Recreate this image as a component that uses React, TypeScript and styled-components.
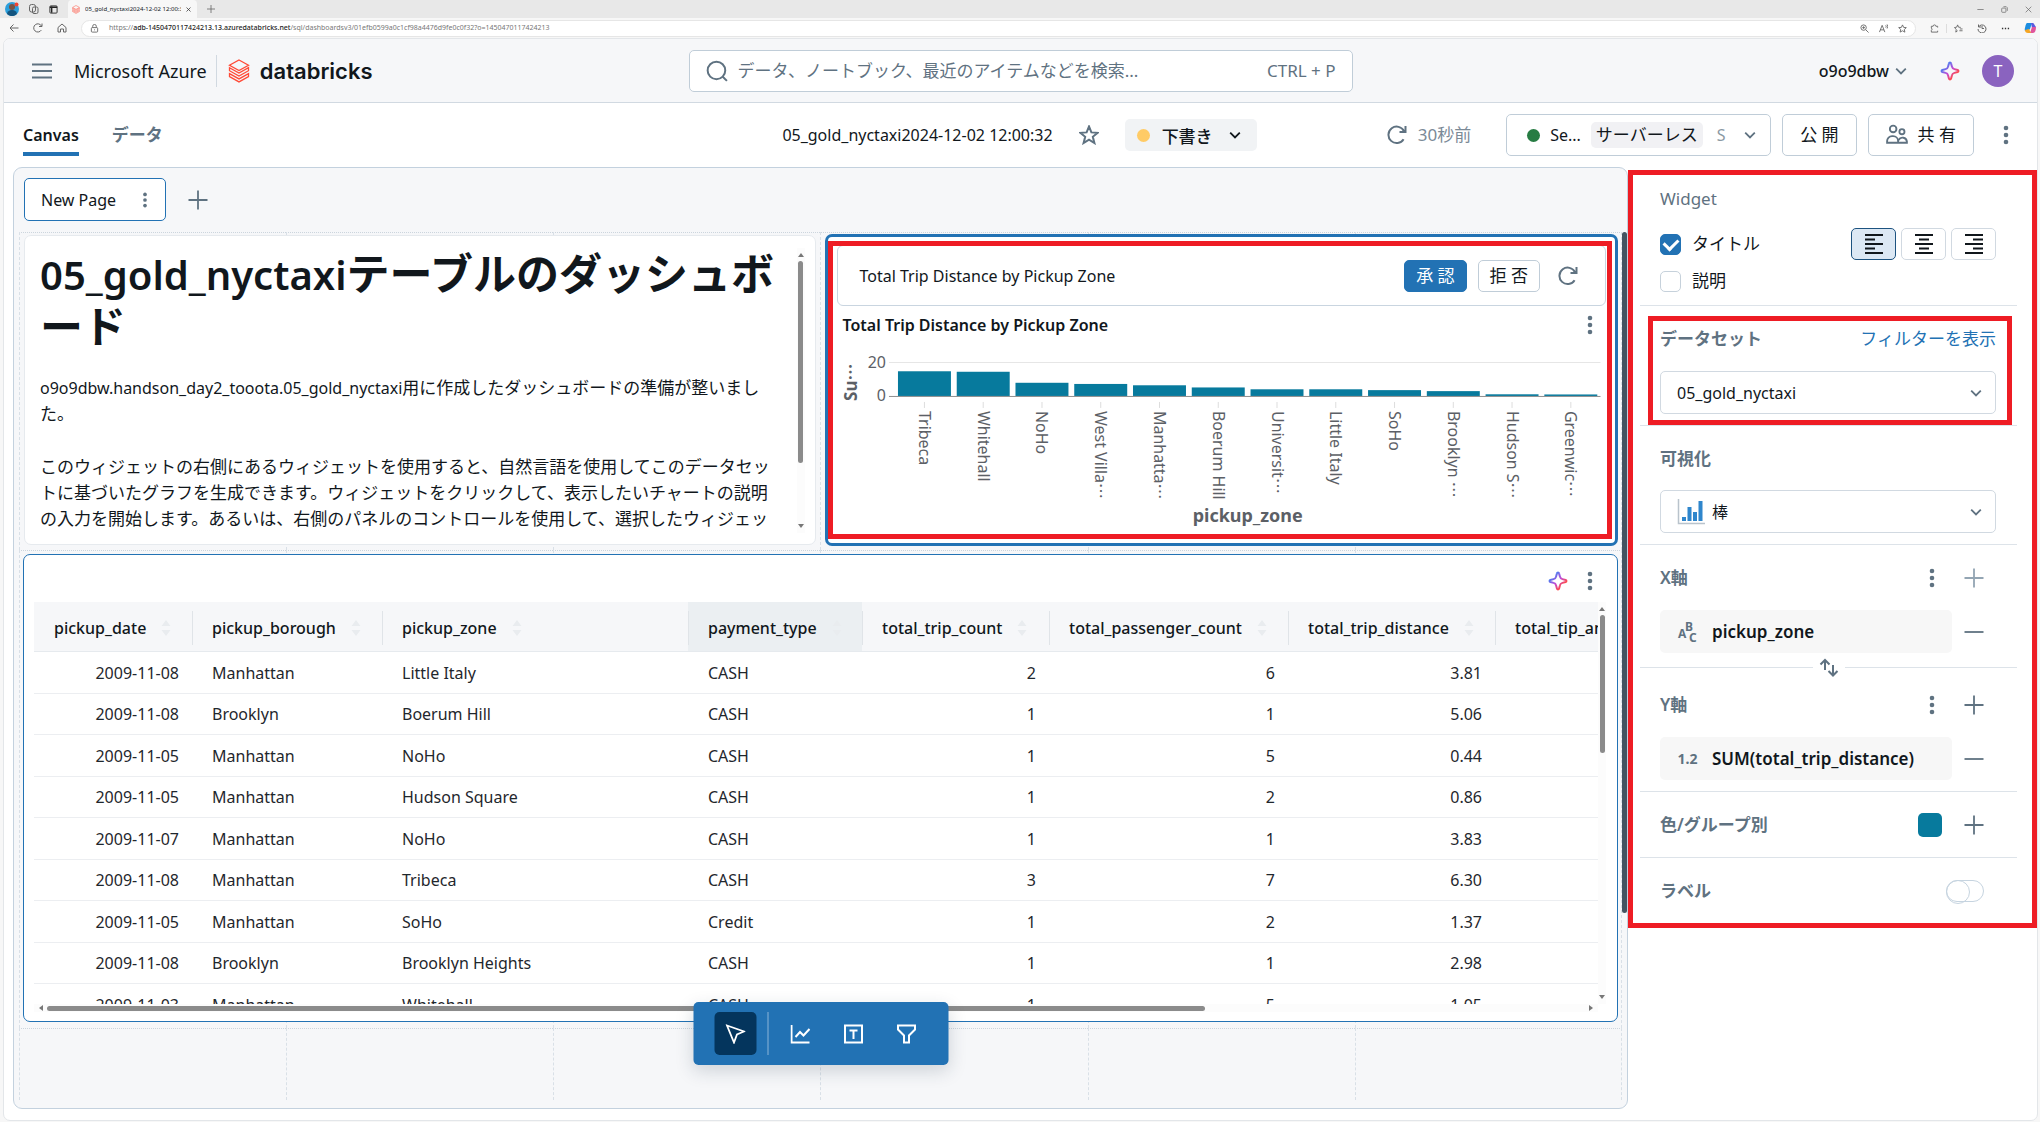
import React from "react";
import styled, { createGlobalStyle, css } from "styled-components";

const c = {
  text: "#11171c",
  muted: "#5f7281",
  line: "#d1d9e1",
  soft: "#e6eaee",
  bg: "#f6f7f9",
  blue: "#2272b4",
  teal: "#077a9d",
  red: "#ee1c24",
};

const Global = createGlobalStyle`
  * { box-sizing: border-box; }
  body { margin: 0; background: #f7f7f7; }
  body, button, input, select { font-family: "Noto Sans", "Noto Sans CJK JP", sans-serif; color: ${c.text}; }
  button { cursor: pointer; }
`;

const Shell = styled.div`
  min-height: 100vh;
  display: flex;
  flex-direction: column;
  padding: 0 2px 1px 3px;
  font-size: 16px;
  line-height: 24px;
`;

/* ---------- icons ---------- */

const Svg = styled.svg<{ $tone?: string }>`
  display: block;
  flex: none;
  fill: none;
  stroke: ${(p) => p.$tone ?? c.muted};
`;

type IconProps = { size?: number; tone?: string; w?: number; children?: React.ReactNode };
const Icon = ({ size = 20, tone, w = 2, children }: IconProps) => (
  <Svg width={size} height={size} viewBox="0 0 20 20" $tone={tone} strokeWidth={w} aria-hidden="true">
    {children}
  </Svg>
);
const Kebab = ({ tone = c.muted }: { tone?: string }) => (
  <Svg width="20" height="20" viewBox="0 0 20 20" aria-hidden="true">
    <g fill={tone} stroke="none">
      <circle cx="10" cy="3" r="2.3" />
      <circle cx="10" cy="10" r="2.3" />
      <circle cx="10" cy="17" r="2.3" />
    </g>
  </Svg>
);
const Plus = ({ tone }: { tone?: string }) => (
  <Icon tone={tone} w={1.8}><path d="M10 .5v19M.5 10h19" /></Icon>
);
const Minus = () => <Icon w={1.8}><path d="M.5 10h19" /></Icon>;
const Chevron = ({ tone }: { tone?: string }) => (
  <Icon size={12} tone={tone} w={3}><path d="M2 6l8 8 8-8" /></Icon>
);
const Refresh = () => (
  <Icon><path d="M16.6 14.2A8.2 8.2 0 1 1 17 6.2M18.5 1v6h-6" /></Icon>
);
const Sparkle = ({ id }: { id: string }) => (
  <Svg width="20" height="20" viewBox="0 0 20 20" aria-hidden="true">
    <defs>
      <linearGradient id={id} x1="0" y1="0" x2="1" y2="1">
        <stop offset="20%" stopColor="#4a7cf0" />
        <stop offset="50%" stopColor="#c24bd6" />
        <stop offset="78%" stopColor="#ff4a4a" />
      </linearGradient>
    </defs>
    <path
      d="M10 1.5c.5 0 .9.3 1 .8l.9 3.3c.3 1.2 1.2 2.2 2.5 2.5l3.3.9c1 .3 1 1.700 0 2l-3.300.9c-1.200.3-2.200 1.200-2.500 2.500l-.9 3.300c-.3 1-1.700 1-2 0l-.9-3.300c-.3-1.200-1.200-2.200-2.500-2.500l-3.300-.9c-1-.3-1-1.700 0-2l3.300-.9c1.200-.3 2.200-1.200 2.500-2.500l.9-3.300c.1-.5.5-.8 1-.8z"
      stroke={`url(#${id})`}
      strokeWidth="2"
    />
  </Svg>
);
const Brick = ({ w, h }: { w: number; h: number }) => (
  <Svg width={w} height={h} viewBox="0 0 22 24" $tone="#ff4b38" strokeWidth="1.3" aria-hidden="true">
    <path d="M11 1l9.500 5.300L11 11.600 1.500 6.300zM1.500 8.700L11 14l9.500-5.300v3L11 17l-9.500-5.300zM1.500 14.600L11 19.900l9.500-5.300v2.900L11 22.900l-9.500-5.400z" />
  </Svg>
);

/* ---------- browser chrome ---------- */

const TabStrip = styled.div`
  height: 18px;
  margin: 0 -2px 0 -3px;
  padding: 0 8px 0 5px;
  background: #e8e8e8;
  display: flex;
  align-items: center;
  gap: 10px;
  font-size: 6px;
  line-height: 10px;
`;
const BrowserTab = styled.div`
  align-self: stretch;
  width: 129px;
  padding: 0 6px 0 4px;
  border-radius: 4px 4px 0 0;
  background: #f7f7f7;
  display: flex;
  align-items: center;
  gap: 5px;
  span { flex: 1; overflow: hidden; white-space: nowrap; }
`;
const Fill = styled.div`
  flex: 1;
`;
const WindowButtons = styled.div`
  display: flex;
  gap: 17px;
`;
const AddressRow = styled.div`
  height: 20px;
  display: flex;
  align-items: center;
  gap: 14px;
  padding: 0 2px 0 6px;
`;
const AddressBar = styled.div`
  flex: 1;
  height: 17px;
  padding: 0 8px;
  border: 1px solid #e6e6e6;
  border-radius: 9px;
  background: #fff;
  display: flex;
  align-items: center;
  gap: 10px;
  color: #777;
  font-size: 7px;
  line-height: 12px;
  b { color: #222; font-weight: 500; }
`;
const Bordered = styled.i`
  height: 9px;
  margin: 0 -7px;
  border-left: 1px solid #ddd;
`;

/* ---------- app header ---------- */

const Page = styled.div`
  flex: 1;
  display: flex;
  flex-direction: column;
  border: 1px solid #e3e6e9;
  border-radius: 7px;
  background: #fff;
  overflow: hidden;
`;
const AppBar = styled.header`
  height: 64px;
  padding: 0 23px;
  border-bottom: 1px solid ${c.line};
  background: ${c.bg};
  display: grid;
  grid-template-columns: 1fr minmax(0, 664px) 1fr;
  align-items: center;
`;
const Row = styled.div<{ $gap?: number; $end?: boolean; $inset?: number }>`
  display: flex;
  align-items: center;
  gap: ${(p) => p.$gap ?? 0}px;
  padding-left: ${(p) => p.$inset ?? 0}px;
  justify-content: ${(p) => (p.$end ? "flex-end" : "flex-start")};
`;
const Bare = styled.button`
  display: flex;
  align-items: center;
  gap: 6px;
  padding: 0;
  border: 0;
  background: none;
  font-size: inherit;
  line-height: inherit;
`;
const Workspace = styled(Bare)`
  font-weight: 500;
`;
const Azure = styled.span`
  margin-left: 22px;
  padding-right: 9px;
  border-right: 1px solid ${c.line};
  font-size: 18px;
  line-height: 32px;
`;
const Brand = styled.a`
  margin-left: 11px;
  display: flex;
  align-items: center;
  gap: 10px;
  color: ${c.text};
  text-decoration: none;
  font: 600 22px/28px Inter, sans-serif;
`;
const Search = styled.label`
  height: 42px;
  padding: 0 16px;
  border: 1px solid #c0cdd8;
  border-radius: 5px;
  background: #fff;
  display: flex;
  align-items: center;
  gap: 10px;
  color: ${c.muted};
  font-size: 17px;
  input {
    flex: 1;
    min-width: 0;
    padding: 0;
    border: 0;
    outline: 0;
    background: none;
    font-size: 17px;
  }
  input::placeholder { color: ${c.muted}; opacity: 1; }
`;
const Avatar = styled.button`
  width: 32px;
  height: 32px;
  border: 0;
  border-radius: 50%;
  background: #8a63bf;
  color: #fff;
  font-size: 16px;
`;

/* ---------- dashboard bar ---------- */

const DashBar = styled.div`
  height: 64px;
  padding: 0 21px 0 19px;
  display: grid;
  grid-template-columns: 1fr auto 1fr;
  align-items: center;
`;
const ViewTab = styled.button<{ $on?: boolean }>`
  height: 35px;
  margin-top: 7px;
  padding: 0 0 3px;
  border: 0;
  border-bottom: 4px solid ${(p) => (p.$on ? c.blue : "transparent")};
  background: none;
  font-size: ${(p) => (p.$on ? 16 : 17)}px;
  line-height: 24px;
  font-weight: 600;
  color: ${(p) => (p.$on ? c.text : c.muted)};
`;
const Dot = styled.i<{ $color: string }>`
  width: 13px;
  height: 13px;
  border-radius: 50%;
  background: ${(p) => p.$color};
`;
const Draft = styled.button`
  height: 32px;
  padding: 0 16px 0 12px;
  border: 0;
  border-radius: 5px;
  background: #f1f3f5;
  display: flex;
  align-items: center;
  gap: 12px;
  font-size: 17px;
  font-weight: 500;
  svg { margin-left: 4px; }
`;
const Outline = styled.button<{ $small?: boolean; $primary?: boolean }>`
  height: ${(p) => (p.$small ? 32 : 42)}px;
  padding: 0 ${(p) => (p.$small ? 11 : 17)}px;
  border: 1px solid ${(p) => (p.$primary ? c.blue : "#c0cdd8")};
  border-radius: 5px;
  background: ${(p) => (p.$primary ? c.blue : "#fff")};
  color: ${(p) => (p.$primary ? "#fff" : c.text)};
  display: flex;
  align-items: center;
  gap: 10px;
  font-size: 17px;
  line-height: 24px;
  white-space: nowrap;
`;
const Compute = styled(Outline)`
  width: 265px;
  padding: 0 14px 0 20px;
  font-size: 16px;
  em {
    padding: 0 5px;
    border-radius: 5px;
    background: #f1f1f4;
    font-style: normal;
    font-size: 17px;
    line-height: 26px;
  }
  small { flex: 1; padding-left: 4px; font-size: 16px; color: #8b98a3; text-align: left; }
`;
const Ago = styled.span`
  margin-right: 24px;
  color: #7b8a97;
  font-size: 17px;
`;

/* ---------- canvas ---------- */

const Main = styled.main`
  flex: 1;
  display: grid;
  grid-template-columns: minmax(0, 1fr) 409px;
  padding: 0 0 11px 9px;
`;
const Canvas = styled.section`
  position: relative;
  border: 1px solid #c3d1de;
  border-radius: 9px;
  background: ${c.bg};
  display: flex;
  flex-direction: column;
`;
const PageTabs = styled.div`
  height: 64px;
  padding: 10px 10px 11px;
  display: flex;
  align-items: center;
  gap: 22px;
`;
const PageTab = styled.button`
  height: 43px;
  width: 142px;
  padding: 0 12px 0 16px;
  border: 1px solid ${c.blue};
  border-radius: 5px;
  background: #fff;
  display: flex;
  align-items: center;
  justify-content: space-between;
  font-size: 16px;
  svg { width: 16px; height: 16px; }
`;
const Board = styled.div`
  flex: 1;
  position: relative;
  margin: 0 5px 8px;
  padding: 2px 4px;
  display: grid;
  grid-template-columns: repeat(2, minmax(0, 1fr));
  grid-template-rows: 312px 468px;
  gap: 8px;
`;
const Guides = styled.div`
  position: absolute;
  inset: 0;
  display: grid;
  grid-template-columns: repeat(6, 1fr);
  grid-template-rows: 318px 478px 1fr;
  i { border-top: 1px dotted #ccd5dd; border-left: 1px dashed #d9e0e7; }
  i:nth-child(6n) { border-right: 1px dashed #d9e0e7; }
`;
const PageThumb = styled.div`
  position: absolute;
  top: 64px;
  right: 0;
  width: 5px;
  height: 681px;
  border-radius: 3px;
  background: #445461;
`;

const Card = styled.article<{ $tone?: "selected" | "hover" }>`
  position: relative;
  border: 1px solid ${c.soft};
  border-radius: 7px;
  background: #fff;
  ${(p) => p.$tone === "selected" && css`border: 3px solid ${c.blue};`}
  ${(p) => p.$tone === "hover" && css`border-color: ${c.blue};`}
`;
const Note = styled(Card)`
  margin: 1px;
  padding: 12px 10px 11px 15px;
  display: flex;
  gap: 14px;
`;
const NoteBody = styled.div`
  flex: 1;
  overflow: hidden;
  height: 285px;
  font-size: 17px;
  line-height: 26px;
  line-break: loose;
  h1 { margin: 0 0 22px; font-size: 43px; line-height: 52px; font-weight: 600; }
  p { margin: 0 0 27px; }
`;
const Latin = styled.span<{ $size: number }>`
  font-size: ${(p) => p.$size}px;
`;

const Bar = styled.div<{ $across?: boolean }>`
  flex: none;
  display: flex;
  flex-direction: ${(p) => (p.$across ? "row" : "column")};
  align-items: center;
  gap: 3px;
  ${(p) => (p.$across ? css`height: 8px; padding: 0 4px;` : css`width: 8px; padding: 4px 0;`)}
  background: #fcfcfc;
`;
const Thumb = styled.i<{ $part: number; $across?: boolean }>`
  flex: ${(p) => p.$part} 1 0;
  ${(p) => (p.$across ? css`height: 5px;` : css`width: 5px;`)}
  border-radius: 3px;
  background: #8b8b8b;
`;
const Rest = styled.i<{ $part: number }>`
  flex: ${(p) => p.$part} 1 0;
`;
const turns = { up: 0, right: 90, down: 180, left: 270 };
const Arrow = ({ to }: { to: keyof typeof turns }) => (
  <Svg width="6" height="6" viewBox="0 0 6 6" aria-hidden="true">
    <path d="M3 1l3 4H0z" fill="#777" stroke="none" transform={`rotate(${turns[to]} 3 3)`} />
  </Svg>
);

const ChartCard = styled(Card)`
  padding: 8px 9px 0;
`;
const Suggestion = styled.div`
  height: 61px;
  padding: 0 27px 0 22px;
  border: 1px solid #c9d5e0;
  border-radius: 6px;
  display: flex;
  align-items: center;
  gap: 11px;
  span { flex: 1; }
  button:last-child { margin-left: 7px; }
`;
const ChartHead = styled.div`
  display: flex;
  align-items: center;
  justify-content: space-between;
  height: 38px;
  padding: 0 6px;
  h2 { margin: 0; font-size: 16px; line-height: 24px; font-weight: 600; }
`;
const ChartSvg = styled.svg`
  display: block;
  width: 100%;
  font-size: 16px;
  fill: #5c6066;
`;
const Mark = styled.div<{ $box: string }>`
  position: absolute;
  inset: ${(p) => p.$box};
  border: 5px solid ${c.red};
  pointer-events: none;
`;

const zones: [string, boolean, number][] = [
  ["Tribeca", false, 14.8],
  ["Whitehall", false, 14.5],
  ["NoHo", false, 7.9],
  ["West Villa", true, 7.2],
  ["Manhatta", true, 6.4],
  ["Boerum Hill", false, 5.1],
  ["Universit", true, 4],
  ["Little Italy", false, 4],
  ["SoHo", false, 3.5],
  ["Brooklyn ", true, 2.9],
  ["Hudson S", true, 1],
  ["Greenwic", true, 0.9],
];
const Dots = () => <tspan fontFamily="Noto Sans CJK JP">…</tspan>;

const TripChart = () => (
  <ChartSvg viewBox="0 0 770 185" role="img" aria-label="Total Trip Distance by Pickup Zone">
    <path d="M52 18.500h712" stroke="#e6e6e6" strokeWidth="1" />
    <text x="49" y="24" textAnchor="end">20</text>
    <text x="49" y="57" textAnchor="end">0</text>
    <text transform="translate(20 57) rotate(-90)" fontWeight="700" fontSize="17">Su<Dots /></text>
    {zones.map(([name, cut, v], i) => {
      const x = 61 + i * 58.8;
      const h = v * 1.67;
      return (
        <g key={name}>
          <rect x={x} y={52 - h} width="53" height={h} fill={c.teal} />
          <path d={`M${x + 26.5} 58v6`} stroke="#ddd" />
          <text transform={`translate(${x + 21} 67) rotate(90)`}>{name}{cut && <Dots />}</text>
        </g>
      );
    })}
    <path d="M52 52.500h712" stroke="#8f8f8f" strokeWidth="1" />
    <text x="411" y="178" textAnchor="middle" fontWeight="700" fontSize="18">pickup_zone</text>
  </ChartSvg>
);

/* ---------- table ---------- */

const TableCard = styled(Card)`
  grid-column: 1 / -1;
  display: grid;
  grid-template-columns: minmax(0, 1fr) 8px;
  grid-template-rows: 47px minmax(0, 1fr) 8px;
  padding: 0 11px 9px 10px;
`;
const TableTools = styled.div`
  grid-column: 1 / -1;
  display: flex;
  align-items: center;
  justify-content: flex-end;
  gap: 12px;
  padding: 5px 6px 0 0;
`;
const Scroller = styled.div`
  overflow: hidden;
`;
const Table = styled.table`
  table-layout: fixed;
  width: 1960px;
  border-collapse: separate;
  border-spacing: 0;
  th, td { padding: 0 13px 0 20px; text-align: left; white-space: nowrap; }
  th { height: 50px; padding: 2px 13px 0 0; border-bottom: 1px solid ${c.soft}; font-weight: 500; }
  tbody tr { height: 42px; }
  tbody tr:nth-child(even) { height: 41px; }
  td { border-bottom: 1px solid #eceef1; color: #1f272d; }
`;
const Th = styled.th<{ $hover?: boolean; $first?: boolean }>`
  && { background: ${(p) => (p.$hover ? "#ebeff2" : c.bg)}; }
  > div {
    height: 34px;
    padding-left: ${(p) => (p.$first ? 20 : 19)}px;
    border-left: ${(p) => (p.$first ? 0 : 1)}px solid #e0e4e8;
    display: flex;
    align-items: center;
    gap: 15px;
  }
`;
const Td = styled.td<{ $right?: boolean }>`
  && { text-align: ${(p) => (p.$right ? "right" : "left")}; }
`;
const columns: [string, number][] = [
  ["pickup_date", 158],
  ["pickup_borough", 190],
  ["pickup_zone", 306],
  ["payment_type", 174],
  ["total_trip_count", 187],
  ["total_passenger_count", 239],
  ["total_trip_distance", 207],
  ["total_tip_amount", 230],
  ["total_fare_amount", 269],
];
const rows = [
  ["2009-11-08", "Manhattan", "Little Italy", "CASH", "2", "6", "3.81"],
  ["2009-11-08", "Brooklyn", "Boerum Hill", "CASH", "1", "1", "5.06"],
  ["2009-11-05", "Manhattan", "NoHo", "CASH", "1", "5", "0.44"],
  ["2009-11-05", "Manhattan", "Hudson Square", "CASH", "1", "2", "0.86"],
  ["2009-11-07", "Manhattan", "NoHo", "CASH", "1", "1", "3.83"],
  ["2009-11-08", "Manhattan", "Tribeca", "CASH", "3", "7", "6.30"],
  ["2009-11-05", "Manhattan", "SoHo", "Credit", "1", "2", "1.37"],
  ["2009-11-08", "Brooklyn", "Brooklyn Heights", "CASH", "1", "1", "2.98"],
  ["2009-11-03", "Manhattan", "Whitehall", "CASH", "1", "5", "1.05"],
];
const Sort = () => (
  <Svg width="10" height="18" viewBox="0 0 10 18" aria-hidden="true">
    <path d="M5 1l4.500 6h-9zM5 17l4.500-6h-9z" fill="#e9ecef" stroke="none" />
  </Svg>
);

/* ---------- floating toolbar ---------- */

const Tools = styled.div`
  position: absolute;
  left: 50%;
  bottom: 43px;
  transform: translateX(-50%);
  height: 63px;
  padding: 0 21px;
  border-radius: 5px;
  background: ${c.blue};
  box-shadow: 0 6px 18px rgba(30, 50, 70, 0.18);
  display: flex;
  align-items: center;
  gap: 11px;
`;
const Tool = styled.button<{ $on?: boolean }>`
  width: 42px;
  height: 43px;
  border: 0;
  border-radius: 5px;
  background: ${(p) => (p.$on ? "#04355d" : "transparent")};
  display: grid;
  place-items: center;
`;
const Split = styled.i`
  height: 43px;
  border-left: 1px solid #8ab4d8;
`;

/* ---------- settings panel ---------- */

const Side = styled.aside`
  position: relative;
  align-self: start;
  margin-top: 3px;
  height: 758px;
  padding: 9px 20px 0 12px;
  color: ${c.muted};
  font-size: 17px;
`;
const Group = styled.section<{ $h: number; $top?: number }>`
  position: relative;
  height: ${(p) => p.$h}px;
  padding: ${(p) => p.$top ?? 0}px 21px 0 20px;
  border-bottom: 1px solid #dde3e9;
  display: flex;
  flex-direction: column;
  &:last-of-type { border: 0; }
`;
const Line = styled.div<{ $h: number }>`
  height: ${(p) => p.$h}px;
  display: flex;
  align-items: center;
  h3 { flex: 1; margin: 0; font-size: 17px; line-height: 24px; font-weight: 600; }
  a { color: ${c.blue}; text-decoration: none; }
`;
const Check = styled.label`
  flex: 1;
  display: flex;
  align-items: center;
  gap: 11px;
  color: ${c.text};
  input {
    appearance: none;
    width: 21px;
    height: 21px;
    margin: 0;
    border: 1px solid #c6d1db;
    border-radius: 5px;
    display: grid;
    place-items: center;
  }
  input:checked { background: ${c.blue}; border-color: ${c.blue}; }
  input:checked::after {
    content: "";
    width: 7px;
    height: 11px;
    margin-bottom: 3px;
    border: solid #fff;
    border-width: 0 3px 3px 0;
    transform: rotate(45deg);
  }
`;
const Align = styled.button<{ $on?: boolean }>`
  width: 45px;
  height: 32px;
  margin-left: 5px;
  border: 1px solid ${(p) => (p.$on ? "#1d5380" : c.line)};
  border-radius: 5px;
  background: ${(p) => (p.$on ? "#dce8f4" : "#fff")};
  display: grid;
  place-items: center;
`;
const Pick = styled.label`
  height: 43px;
  padding: 0 13px 0 16px;
  border: 1px solid ${c.line};
  border-radius: 5px;
  display: flex;
  align-items: center;
  gap: 6px;
  select {
    flex: 1;
    height: 41px;
    border: 0;
    outline: 0;
    padding: 0;
    appearance: none;
    background: none;
    font-size: 16px;
  }
`;
const Acts = styled.div`
  display: flex;
  align-items: center;
  gap: 22px;
  margin-right: 12px;
`;
const FieldName = styled.button`
  flex: 1;
  height: 43px;
  padding: 0 16px;
  border: 0;
  border-radius: 5px;
  background: #f7f7f7;
  display: flex;
  align-items: center;
  gap: 13px;
  font-size: 17px;
  font-weight: 600;
  white-space: nowrap;
`;
const FieldSlot = styled.div`
  display: flex;
  align-items: center;
  gap: 12px;
  padding-right: 12px;
`;
const TypeMark = styled.span`
  width: 23px;
  font-size: 14px;
  line-height: 16px;
  font-weight: 700;
  color: ${c.muted};
`;
const Swap = styled.button`
  position: absolute;
  left: 50%;
  bottom: -13px;
  transform: translateX(-50%);
  width: 32px;
  height: 24px;
  padding: 0;
  border: 0;
  background: #fff;
  display: grid;
  place-items: center;
`;
const Swatch = styled.button`
  width: 24px;
  height: 24px;
  padding: 0;
  border: 0;
  border-radius: 5px;
  background: ${c.teal};
`;
const Switch = styled.input`
  appearance: none;
  width: 38px;
  height: 22px;
  margin: 0;
  border: 1px solid #c6d4e0;
  border-radius: 11px;
  display: flex;
  &::before {
    content: "";
    width: 22px;
    height: 22px;
    margin: -1px;
    border: 1px solid #c6d4e0;
    border-radius: 50%;
  }
`;

const AlignIcon = ({ d }: { d: string }) => (
  <Icon tone={c.text} w={2}><path d={d} /></Icon>
);

const Settings = () => (
  <Side>
    <Group $h={127}>
      <Line $h={40}>Widget</Line>
      <Line $h={50}>
        <Check><input type="checkbox" defaultChecked />タイトル</Check>
        <Align $on aria-label="左揃え"><AlignIcon d="M1 1h18M1 5.500h10M1 10h18M1 14.500h10M1 19h18" /></Align>
        <Align aria-label="中央揃え"><AlignIcon d="M1 1h18M5 5.500h10M1 10h18M5 14.500h10M1 19h18" /></Align>
        <Align aria-label="右揃え"><AlignIcon d="M1 1h18M9 5.500h10M1 10h18M9 14.500h10M1 19h18" /></Align>
      </Line>
      <Line $h={24}>
        <Check><input type="checkbox" />説明</Check>
      </Line>
    </Group>
    <Group $h={120} $top={1}>
      <Line $h={64}><h3>データセット</h3><a href="#filter">フィルターを表示</a></Line>
      <Pick>
        <select aria-label="データセット"><option>05_gold_nyctaxi</option></select>
        <Chevron />
      </Pick>
      <Mark $box="10px 5px 0 8px" />
    </Group>
    <Group $h={119} $top={1}>
      <Line $h={63}><h3>可視化</h3></Line>
      <Pick>
        <Svg width="29" height="26" viewBox="0 0 29 26" aria-hidden="true">
          <path d="M1.500 0v24.500H28" stroke="#b9c3cc" strokeWidth="1.500" />
          <path d="M7 22v-4M12.500 22V8M18 22v-9M23.500 22V2" stroke="#2f86cc" strokeWidth="4" />
        </Svg>
        <select aria-label="可視化"><option>棒</option></select>
        <Chevron />
      </Pick>
    </Group>
    <Group $h={123} $top={1}>
      <Line $h={64}>
        <h3>X軸</h3>
        <Acts>
          <Bare aria-label="X軸のメニュー"><Kebab /></Bare>
          <Bare aria-label="X軸に追加"><Plus tone="#93a5b3" /></Bare>
        </Acts>
      </Line>
      <FieldSlot>
        <FieldName>
          <Svg width="23" height="22" viewBox="0 0 23 22" aria-hidden="true">
            <g fill={c.muted} stroke="none" fontSize="12" fontWeight="700">
              <text x="2" y="17">A</text>
              <text x="9" y="10">B</text>
              <text x="13" y="21">C</text>
            </g>
          </Svg>
          pickup_zone
        </FieldName>
        <Bare aria-label="pickup_zoneを削除"><Minus /></Bare>
      </FieldSlot>
      <Swap aria-label="軸を入れ替え">
        <Icon><path d="M6 12V2M1.500 6.500L6 2l4.500 4.500M14 7v10M9.500 13l4.500 4.500 4.500-4.500" /></Icon>
      </Swap>
    </Group>
    <Group $h={124} $top={5}>
      <Line $h={64}>
        <h3>Y軸</h3>
        <Acts>
          <Bare aria-label="Y軸のメニュー"><Kebab /></Bare>
          <Bare aria-label="Y軸に追加"><Plus /></Bare>
        </Acts>
      </Line>
      <FieldSlot>
        <FieldName><TypeMark>1.2</TypeMark>SUM(total_trip_distance)</FieldName>
        <Bare aria-label="SUMを削除"><Minus /></Bare>
      </FieldSlot>
    </Group>
    <Group $h={66}>
      <Line $h={66}>
        <h3>色/グループ別</h3>
        <Acts>
          <Swatch aria-label="色" />
          <Bare aria-label="色を追加"><Plus /></Bare>
        </Acts>
      </Line>
    </Group>
    <Group $h={66}>
      <Line $h={66}>
        <h3 id="label-switch">ラベル</h3>
        <Acts><Switch type="checkbox" role="switch" aria-labelledby="label-switch" /></Acts>
      </Line>
    </Group>
    <Mark $box="0" />
  </Side>
);

const tiny = "#666";

export default function App() {
  return (
    <>
      <Global />
      <Shell lang="ja">
        <TabStrip>
          <Svg width="14" height="14" viewBox="0 0 14 14" aria-hidden="true">
            <circle cx="7" cy="7" r="7" fill="#2b9fdc" stroke="none" />
            <circle cx="7" cy="5" r="3" fill="#7a5343" stroke="none" />
            <path d="M2 12a5 4 0 0 1 10 0 7 7 0 0 1-10 0z" fill="#13547f" stroke="none" />
            <circle cx="11.500" cy="2.500" r="2" fill="#e43" stroke="none" />
          </Svg>
          <Icon size={10} tone={tiny}><rect x="1" y="1" width="12" height="15" rx="4" /><rect x="7" y="6" width="11" height="13" rx="3" /></Icon>
          <Icon size={9} tone="#222"><rect x="2" y="2" width="16" height="16" rx="2" /><path d="M2 5h16M6 3v14" strokeWidth="3" /></Icon>
          <BrowserTab>
            <Brick w={8} h={9} />
            <span>05_gold_nyctaxi2024-12-02 12:00:32</span>
            <Icon size={5} tone="#333" w={3}><path d="M2 2l16 16M18 2L2 18" /></Icon>
          </BrowserTab>
          <Icon size={8} tone={tiny}><path d="M10 0v20M0 10h20" /></Icon>
          <Fill />
          <WindowButtons>
            <Icon size={7} tone={tiny}><path d="M1 10h18" /></Icon>
            <Icon size={7} tone={tiny}><rect x="2" y="6" width="12" height="12" rx="2" /><path d="M7 2h8l3 3v9" /></Icon>
            <Icon size={7} tone={tiny}><path d="M2 2l16 16M18 2L2 18" /></Icon>
          </WindowButtons>
        </TabStrip>
        <AddressRow>
          <Icon size={10} tone={tiny}><path d="M19 10H2M9 3l-7 7 7 7" /></Icon>
          <Icon size={10} tone={tiny}><path d="M16.600 14.200A8.200 8.200 0 1 1 17 6.200M18 1v6h-6" /></Icon>
          <Icon size={10} tone={tiny}><path d="M2 9l8-7 8 7v9h-5v-6H7v6H2z" /></Icon>
          <AddressBar>
            <Icon size={9} tone={tiny}><rect x="3" y="8" width="14" height="10" rx="2" /><path d="M6 8V5a4 4 0 0 1 8 0v3M10 12v2" /></Icon>
            <span>https://<b>adb-1450470117424213.13.azuredatabricks.net</b>/sql/dashboardsv3/01efb0599a0c1cf98a4476d9fe0c0f32?o=1450470117424213</span>
            <Fill />
            <Icon size={9} tone={tiny}><circle cx="8" cy="8" r="6" /><path d="M13 13l6 6M5 8h6M8 5v6" /></Icon>
            <Icon size={9} tone={tiny}><path d="M1 18L7 3l6 15M3 13h8M15 3q2 2 0 5M18 1q3 4 0 9" /></Icon>
            <Icon size={9} tone={tiny}><path d="M10 2l2.500 5.500 6 .6-4.500 4 1.300 6L10 15l-5.300 3L6 12 1.500 8l6-.5z" /></Icon>
          </AddressBar>
          <Icon size={9} tone={tiny}><path d="M17 8V5h-4a3 3 0 0 0-6 0H3v4a3 3 0 0 1 0 5v4h14v-3" /></Icon>
          <Bordered />
          <Icon size={9} tone={tiny}><path d="M8 2l2 5 5 .6M8 2L6 7l-5 1 4 4-1 6 4-3M13 11h6M12 15h7" /></Icon>
          <Icon size={10} tone={tiny}><path d="M3 3v5h5M3 8a8 8 0 1 1-1 4M10 6v5h4" /></Icon>
          <Icon size={9} tone="#333" w={3}><path d="M2 10h3M8.500 10h3M15 10h3" /></Icon>
          <Svg width="12" height="12" viewBox="0 0 12 12" aria-hidden="true">
            <g stroke="none">
              <path d="M3 1h5L6 7 4 9H1C0 8 2 1 3 1z" fill="#1c8de0" />
              <path d="M7 1h2c1 0 2 3 3 4L8 6z" fill="#5b5be0" />
              <path d="M12 5c0 3-1 6-3 6H6l2-6z" fill="#e0559c" />
              <path d="M1 8l4-1 2 4H4C2 11 1 10 1 8z" fill="#f5a623" />
            </g>
          </Svg>
        </AddressRow>

        <Page>
          <AppBar>
            <Row $inset={5}>
              <Bare aria-label="メニュー"><Icon><path d="M0 3.500h20M0 10h20M0 16.500h20" /></Icon></Bare>
              <Azure>Microsoft Azure</Azure>
              <Brand href="#home"><Brick w={22} h={24} />databricks</Brand>
            </Row>
            <Search>
              <Icon size={22} w={1.8}><circle cx="9.500" cy="9.500" r="8" /><path d="M15 15l4 4" /></Icon>
              <input aria-label="検索" placeholder="データ、ノートブック、最近のアイテムなどを検索..." />
              CTRL + P
            </Search>
            <Row $end $gap={33}>
              <Workspace>o9o9dbw<Chevron /></Workspace>
              <Row $gap={22}>
                <Bare aria-label="アシスタント"><Sparkle id="sparkle-bar" /></Bare>
                <Avatar>T</Avatar>
              </Row>
            </Row>
          </AppBar>

          <DashBar>
            <Row $gap={33}>
              <ViewTab $on>Canvas</ViewTab>
              <ViewTab>データ</ViewTab>
            </Row>
            <Row $gap={26}>
              <span>05_gold_nyctaxi2024-12-02 12:00:32</span>
              <Bare aria-label="お気に入り">
                <Icon><path d="M10 1.500l2.400 5.900 6.300.4-4.900 4 1.600 6.200L10 14.600 4.600 18l1.600-6.200-4.900-4 6.300-.4z" /></Icon>
              </Bare>
              <Draft><Dot $color="#ffcb66" />下書き<Chevron tone={c.text} /></Draft>
            </Row>
            <Row $end $gap={22}>
              <Row $gap={11}>
                <Bare aria-label="更新"><Refresh /></Bare>
                <Ago>30秒前</Ago>
                <Compute><Dot $color="#277c43" />Se...<em>サーバーレス</em><small>S</small><Chevron /></Compute>
                <Outline>公 開</Outline>
                <Outline>
                  <Icon size={22} w={1.7}>
                    <circle cx="6.500" cy="4.500" r="3" /><circle cx="14.500" cy="7" r="2.300" />
                    <path d="M1 17v-1.500a4.500 4.500 0 0 1 4.500-4.500h1a4.500 4.500 0 0 1 4.500 4.500V17zM11 17h8v-1a4 4 0 0 0-7.500-1.500" />
                  </Icon>
                  共 有
                </Outline>
              </Row>
              <Bare aria-label="その他"><Kebab /></Bare>
            </Row>
          </DashBar>

          <Main>
            <Canvas>
              <PageTabs>
                <PageTab>New Page<Kebab /></PageTab>
                <Bare aria-label="ページを追加"><Plus /></Bare>
              </PageTabs>
              <Board>
                <Guides aria-hidden="true">{Array.from({ length: 18 }, (_, i) => <i key={i} />)}</Guides>

                <Note>
                  <NoteBody>
                    <h1><Latin $size={40}>05_gold_nyctaxi</Latin>テーブルのダッシュボード</h1>
                    <p>
                      <Latin $size={16}>o9o9dbw.handson_day2_tooota.05_gold_nyctaxi</Latin>用に作成したダッシュボードの準備が整いました。
                    </p>
                    <p>
                      このウィジェットの右側にあるウィジェットを使用すると、自然言語を使用してこのデータセットに基づいたグラフを生成できます。ウィジェットをクリックして、表示したいチャートの説明の入力を開始します。あるいは、右側のパネルのコントロールを使用して、選択したウィジェッ
                    </p>
                  </NoteBody>
                  <Bar><Arrow to="up" /><Thumb $part={206} /><Rest $part={55} /><Arrow to="down" /></Bar>
                </Note>

                <ChartCard $tone="selected">
                  <Suggestion>
                    <span>Total Trip Distance by Pickup Zone</span>
                    <Outline $small $primary>承 認</Outline>
                    <Outline $small>拒 否</Outline>
                    <Bare aria-label="再生成"><Refresh /></Bare>
                  </Suggestion>
                  <ChartHead>
                    <h2>Total Trip Distance by Pickup Zone</h2>
                    <Bare aria-label="グラフのメニュー"><Kebab /></Bare>
                  </ChartHead>
                  <TripChart />
                  <Mark $box="4px 3px 4px 0" />
                </ChartCard>

                <TableCard $tone="hover">
                  <TableTools>
                    <Bare aria-label="AIアシスト"><Sparkle id="sparkle-table" /></Bare>
                    <Bare aria-label="表のメニュー"><Kebab /></Bare>
                  </TableTools>
                  <Scroller>
                    <Table>
                      <colgroup>{columns.map(([n, w]) => <col key={n} width={w} />)}</colgroup>
                      <thead>
                        <tr>
                          {columns.map(([n], i) => (
                            <Th key={n} $first={i === 0} $hover={i === 3}><div>{n}<Sort /></div></Th>
                          ))}
                        </tr>
                      </thead>
                      <tbody>
                        {rows.map((r, y) => (
                          <tr key={y}>
                            {r.map((v, i) => <Td key={i} $right={i === 0 || i > 3}>{v}</Td>)}
                            <Td /><Td />
                          </tr>
                        ))}
                      </tbody>
                    </Table>
                  </Scroller>
                  <Bar><Arrow to="up" /><Thumb $part={139} /><Rest $part={238} /><Arrow to="down" /></Bar>
                  <Bar $across><Arrow to="left" /><Thumb $across $part={1160} /><Rest $part={377} /><Arrow to="right" /></Bar>
                </TableCard>
              </Board>
              <PageThumb />
              <Tools role="toolbar">
                <Tool $on aria-label="選択"><Icon tone="#fff" w={1.8}><path d="M1.500 1.500l17 6-7 3-3 8z" /></Icon></Tool>
                <Split />
                <Tool aria-label="可視化を追加"><Icon tone="#fff"><path d="M1 1v17.500h18M5 13l4.500-5 3.500 3.500L19 5" /></Icon></Tool>
                <Tool aria-label="テキストを追加"><Icon tone="#fff"><rect x="1.500" y="1.500" width="17" height="17" /><path d="M6 6.500h8M10 6.500V15" /></Icon></Tool>
                <Tool aria-label="フィルターを追加"><Icon tone="#fff"><path d="M1.500 1.500h17v4l-6 6v7h-5v-7l-6-6z" /></Icon></Tool>
              </Tools>
            </Canvas>
            <Settings />
          </Main>
        </Page>
      </Shell>
    </>
  );
}
